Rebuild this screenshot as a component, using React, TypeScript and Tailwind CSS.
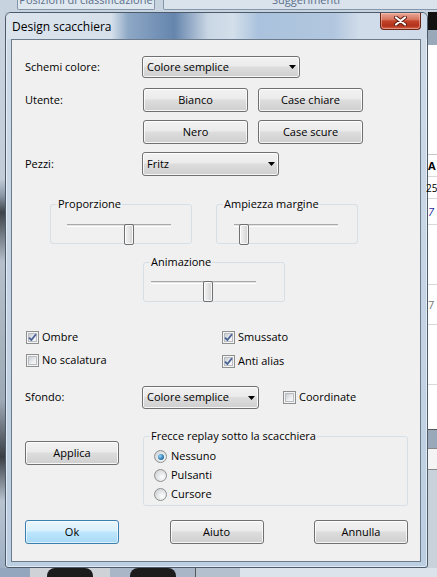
import React from "react";

const FACE =
  "bg-[linear-gradient(#f2f2f2,#ebebeb_45%,#dddddd_50%,#cfcfcf)] shadow-[inset_0_0_0_1px_rgba(255,255,255,0.8)]";

function Button({ label, className = "", focused = false }: { label: string; className?: string; focused?: boolean }) {
  return (
    <div
      className={`flex h-[24px] items-center justify-center rounded-[3px] border ${
        focused
          ? "border-[#3c7fb1] bg-[linear-gradient(#eaf6fd,#d9f0fc_45%,#bee6fd_50%,#a7d9f5)] shadow-[inset_0_0_0_1px_rgba(255,255,255,0.6)]"
          : `border-[#707070] ${FACE}`
      } ${className}`}
    >
      {label}
    </div>
  );
}

function Combo({ value, className = "" }: { value: string; className?: string }) {
  return (
    <div className={`flex items-center justify-between rounded-[3px] border border-[#707070] pl-[4px] pr-[3px] ${FACE} ${className}`}>
      <span>{value}</span>
      <svg width="7" height="4" viewBox="0 0 7 4" aria-hidden>
        <path d="M0 0h7L3.5 4z" fill="#000" />
      </svg>
    </div>
  );
}

function Check({ label, checked = false }: { label: string; checked?: boolean }) {
  return (
    <div className="flex h-[13px] items-center gap-[3px]">
      <div className="relative h-[13px] w-[13px] shrink-0 border border-[#8e8f8f] bg-[#f4f4f4] p-[1px]">
        <div className="h-full w-full border border-[#b9bdc2] bg-[linear-gradient(135deg,#c9ced4,#eceef0_60%,#f8f8f8)]" />
        {checked && (
          <svg className="absolute inset-0" width="11" height="11" viewBox="0 0 11 11" aria-hidden>
            <path d="M2 5.6 L4.4 8 L9 2.2" fill="none" stroke="#4a6296" strokeWidth="1.8" strokeLinejoin="round" />
          </svg>
        )}
      </div>
      <span>{label}</span>
    </div>
  );
}

function Radio({ label, checked = false }: { label: string; checked?: boolean }) {
  return (
    <div className="flex h-[13px] items-center gap-[4px]">
      <div className="flex h-[13px] w-[13px] shrink-0 items-center justify-center rounded-full border border-[#8e8f8f] bg-[radial-gradient(circle_at_65%_65%,#ffffff,#e4e6e8_45%,#c6c9cd)]">
        {checked && (
          <div className="h-[6px] w-[6px] rounded-full bg-[radial-gradient(circle_at_35%_35%,#9bd6f7,#2a78b4_60%,#0f3f6e)]" />
        )}
      </div>
      <span>{label}</span>
    </div>
  );
}

function Group({ title, className = "", children }: { title: string; className?: string; children?: React.ReactNode }) {
  return (
    <div className={`relative rounded-[3px] border border-[#d5dfe5] ${className}`}>
      <span className="absolute -top-[9px] left-[6px] bg-[#f0f0f0] px-[1px] leading-[16px]">{title}</span>
      {children}
    </div>
  );
}

function Slider({ value, className = "" }: { value: number; className?: string }) {
  return (
    <div className={`relative h-[21px] ${className}`}>
      <div className="mt-[8px] h-[3px] border-t border-b border-t-[#a9a9a9] border-b-white bg-[#e2e2e2]" />
      <div
        className="absolute top-0 h-[21px] w-[10px] rounded-[2px] border border-[#707070] bg-[linear-gradient(90deg,#f3f3f3,#e4e4e4_50%,#d2d2d2)] shadow-[inset_0_0_0_1px_rgba(255,255,255,0.8)]"
        style={{ left: value }}
      />
    </div>
  );
}

export default function App() {
  return (
    <div className="flex h-[577px] w-[437px] flex-col overflow-hidden bg-[#b9c6d3] font-['Open_Sans',sans-serif] text-[11px] text-black">
      {/* app behind: tab strip */}
      <div className="flex h-[12px] shrink-0 bg-[#c7d4e0]">
        <div className="ml-[17px] flex h-[10px] w-[138px] shrink-0 justify-center overflow-hidden rounded-b-[2px] border border-t-0 border-[#8396ab] bg-[#dfe7ef]">
          <span className="-mt-[6px] leading-[12px] text-[#5a6f8a]">Posizioni di classificazione</span>
        </div>
        <div className="ml-[8px] flex h-[10px] w-[286px] shrink-0 justify-center overflow-hidden rounded-b-[2px] border border-t-0 border-[#8396ab] bg-[#dae3ec]">
          <span className="-mt-[6px] leading-[12px] text-[#5a6f8a]">Suggerimenti</span>
        </div>
      </div>

      <div className="flex h-[556px] shrink-0">
        <div className="w-[5px] shrink-0 bg-[linear-gradient(180deg,#c9d4df_0%,#c1ccd8_30%,#8c98a6_33%,#3d4349_36%,#b5c0cc_45%,#9ea9b6_70%,#3a3f45_80%,#b8c3cf_88%,#9fb0c4_100%)]" />

        {/* dialog window */}
        <div className="flex w-[423px] shrink-0 flex-col rounded-t-[6px] rounded-b-[3px] border border-[#4b5b6c] bg-[linear-gradient(180deg,#cfdbe7,#c3d3e4_60%,#bccee2)] shadow-[inset_0_0_0_1px_rgba(255,255,255,0.55)]">
          <div className="flex h-[26px] shrink-0 items-start justify-between rounded-t-[5px] bg-[linear-gradient(90deg,#dbe4ed_0%,#d6e0ea_25%,#8ea8c6_29%,#6585ad_40%,#c9d6e4_48%,#d3dfea_54%,#aac2dd_60%,#b2c7df_78%,#d0dcea_84%,#cfdbe8_100%)] pl-[6px] pr-[6px]">
            <span className="self-center pt-[1px] text-[12px] leading-[16px]">Design scacchiera</span>
            <div className="flex h-[17px] w-[41px] items-center justify-center rounded-b-[4px] border border-t-0 border-[#6a2418] bg-[linear-gradient(#eaa897,#d7765f_40%,#c4442b_50%,#b3301a_80%,#d2664c)] shadow-[inset_0_0_0_1px_rgba(255,210,200,0.45)]">
              <svg width="13" height="10" viewBox="0 0 13 10" aria-hidden>
                <path d="M2 1.5 L11 8.5 M11 1.5 L2 8.5" stroke="#5e1d12" strokeWidth="4" strokeLinecap="round" />
                <path d="M2 1.5 L11 8.5 M11 1.5 L2 8.5" stroke="#ffffff" strokeWidth="2.2" strokeLinecap="round" />
              </svg>
            </div>
          </div>

          <div className="flex-1 pl-[5px] pr-[6px] pb-[4px]">
            <div className="flex h-[523px] w-[410px] flex-col border border-[#6b7b8b] bg-[#f0f0f0] pl-[13px] pt-[16px]">
              {/* Schemi colore */}
              <div className="flex h-[22px] items-center">
                <span className="w-[117px]">Schemi colore:</span>
                <Combo value="Colore semplice" className="h-[22px] w-[158px]" />
              </div>

              {/* Utente */}
              <div className="mt-[10px] flex items-start">
                <span className="w-[118px] leading-[24px]">Utente:</span>
                <div className="flex flex-col gap-[8px]">
                  <div className="flex gap-[10px]">
                    <Button label="Bianco" className="w-[105px]" />
                    <Button label="Case chiare" className="w-[105px]" />
                  </div>
                  <div className="flex gap-[10px]">
                    <Button label="Nero" className="w-[105px]" />
                    <Button label="Case scure" className="w-[105px]" />
                  </div>
                </div>
              </div>

              {/* Pezzi */}
              <div className="mt-[8px] flex h-[24px] items-center">
                <span className="w-[117px]">Pezzi:</span>
                <Combo value="Fritz" className="h-[24px] w-[137px]" />
              </div>

              {/* sliders */}
              <div className="mt-[28px] flex">
                <Group title="Proporzione" className="ml-[25px] h-[40px] w-[142px] pt-[11px]">
                  <Slider value={57} className="ml-[16px] w-[104px]" />
                </Group>
                <Group title="Ampiezza margine" className="ml-[24px] h-[40px] w-[142px] pt-[11px]">
                  <Slider value={5} className="ml-[17px] w-[104px]" />
                </Group>
              </div>
              <div className="mt-[18px] flex">
                <Group title="Animazione" className="ml-[118px] h-[40px] w-[142px] pt-[10px]">
                  <Slider value={52} className="ml-[7px] w-[105px]" />
                </Group>
              </div>

              {/* checkboxes */}
              <div className="mt-[29px] flex">
                <div className="ml-[1px] flex w-[196px] flex-col gap-[10px]">
                  <Check label="Ombre" checked />
                  <Check label="No scalatura" />
                </div>
                <div className="flex flex-col gap-[11px]">
                  <Check label="Smussato" checked />
                  <Check label="Anti alias" checked />
                </div>
              </div>

              {/* Sfondo */}
              <div className="mt-[18px] flex h-[23px] items-center">
                <span className="w-[117px]">Sfondo:</span>
                <Combo value="Colore semplice" className="h-[23px] w-[117px]" />
                <div className="ml-[24px]">
                  <Check label="Coordinate" />
                </div>
              </div>

              {/* Applica + frecce */}
              <div className="mt-[27px] flex items-start">
                <Button label="Applica" className="mt-[5px] w-[94px]" />
                <Group title="Frecce replay sotto la scacchiera" className="ml-[24px] flex h-[70px] w-[265px] flex-col gap-[6px] pl-[10px] pt-[13px]">
                  <Radio label="Nessuno" checked />
                  <Radio label="Pulsanti" />
                  <Radio label="Cursore" />
                </Group>
              </div>

              {/* bottom buttons */}
              <div className="mt-[14px] flex w-[383px] justify-between">
                <Button label="Ok" focused className="w-[94px]" />
                <Button label="Aiuto" className="w-[94px]" />
                <Button label="Annulla" className="w-[94px]" />
              </div>
            </div>
          </div>
        </div>

        {/* app behind: right edge */}
        <div className="flex w-[9px] shrink-0 flex-col bg-white">
          <div className="h-[18px] bg-[#111]" />
          <div className="h-[15px] bg-[#9aa9ba]" />
          <div className="h-[110px] border-b border-[#c8c8c8]" />
          <div className="h-[22px] border-b border-[#d8d8d8] text-[11px] font-bold leading-[22px]">A</div>
          <div className="h-[22px] border-b border-[#d8d8d8] text-[10px] leading-[22px] -indent-[2px]">25</div>
          <div className="h-[26px] border-b border-[#d8d8d8] text-[11px] italic leading-[26px] text-[#2a2aa0]">7</div>
          <div className="h-[60px] border-b border-[#d8d8d8]" />
          <div className="h-[40px] border-b border-[#d8d8d8] text-[11px] leading-[40px] text-[#777]">7</div>
          <div className="h-[60px] border-b border-[#d8d8d8]" />
          <div className="h-[45px] border-b border-[#555]" />
          <div className="h-[18px] bg-[#9aa9ba]" />
          <div className="h-[22px] border-y border-[#888] bg-[#f4f4f4]" />
          <div className="flex-1 bg-[#c9d1da]" />
        </div>
      </div>

      {/* app behind: bottom edge */}
      <div className="flex h-[9px] shrink-0 bg-[#dde3ea]">
        <div className="w-[30px] bg-[#93a6be]" />
        <div className="flex w-[80px] justify-center bg-[#cfd3d8]">
          <div className="h-[16px] w-[46px] rounded-full bg-[#1c1c1c]" />
        </div>
        <div className="flex w-[85px] justify-center bg-[#a9b6c7]">
          <div className="h-[16px] w-[46px] rounded-full bg-[#1c1c1c]" />
        </div>
        <div className="w-[45px] border-l border-[#555] bg-[#b5c0ce]" />
      </div>
    </div>
  );
}
